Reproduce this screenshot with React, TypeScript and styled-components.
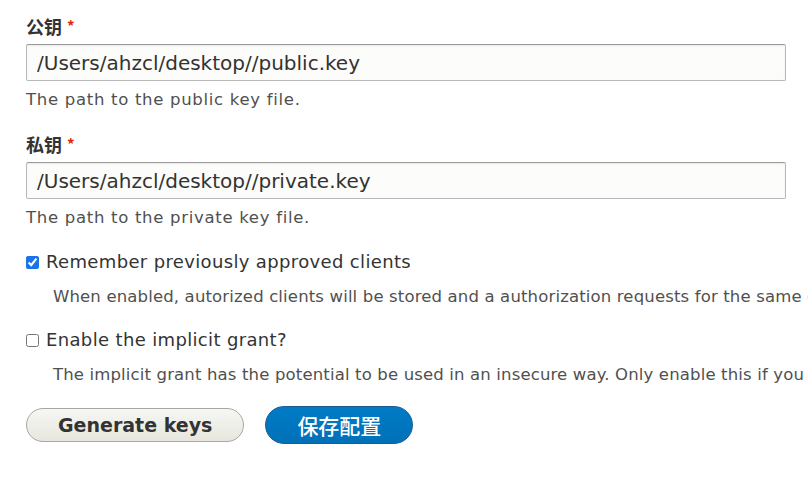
import React from "react";
import styled, { createGlobalStyle } from "styled-components";

const GlobalStyle = createGlobalStyle`
  html, body {
    margin: 0;
    padding: 0;
    background: #fff;
  }
  body {
    font-family: "DejaVu Sans", "Noto Sans CJK SC", sans-serif;
    color: #333;
    overflow: hidden;
  }
`;

const Page = styled.form`
  width: 808px;
  height: 480px;
  padding: 14px 0 0 26px;
  box-sizing: border-box;
  overflow: hidden;
`;

const FormItem = styled.div`
  margin-bottom: 21px;
`;

const Label = styled.label`
  display: block;
  font-size: 18px;
  font-weight: bold;
  line-height: 24px;
  color: #333;
  margin-bottom: 6px;
  font-family: "Noto Sans CJK SC", "DejaVu Sans", sans-serif;
`;

const Required = styled.span`
  color: #e32700;
  font-size: 15px;
  margin-left: 5px;
  vertical-align: 2px;
`;

const TextInput = styled.input`
  display: block;
  width: 760px;
  height: 37px;
  box-sizing: border-box;
  padding: 0 10px;
  border: 1px solid #b8b8b8;
  border-top-color: #999;
  border-radius: 2px;
  background: #fcfcfa;
  box-shadow: inset 0 1px 2px rgba(0, 0, 0, 0.08);
  font-family: "DejaVu Sans", sans-serif;
  font-size: 20px;
  color: #333;
  outline: none;
`;

const Description = styled.div`
  font-size: 16.5px;
  letter-spacing: 0.7px;
  line-height: 22px;
  color: #505050;
  margin-top: 8px;
  white-space: nowrap;
`;

const CheckItem = styled.div`
  margin-bottom: 20px;
  white-space: nowrap;
`;

const CheckLabel = styled.label`
  display: flex;
  align-items: center;
  font-size: 18px;
  letter-spacing: 0.35px;
  line-height: 24px;
  color: #333;
`;

const CheckBox = styled.input`
  width: 13px;
  height: 13px;
  margin: 0 7px 0 0;
  accent-color: #1a73e8;
`;

const CheckDescription = styled(Description)`
  margin-top: 12px;
  padding-left: 27px;
  letter-spacing: 0.15px;
`;

const Actions = styled.div`
  display: flex;
  align-items: center;
  gap: 21px;
  margin-top: 8px;
`;

const Button = styled.button<{ $primary?: boolean }>`
  height: ${({ $primary }) => ($primary ? "38px" : "34px")};
  padding: 0 31px;
  border-radius: 20px;
  border: 1px solid ${({ $primary }) => ($primary ? "#1e5c90" : "#a6a6a6")};
  background: ${({ $primary }) =>
    $primary
      ? "linear-gradient(to bottom, #007bc6, #0071b8)"
      : "linear-gradient(to bottom, #f6f6f3, #e7e7df)"};
  color: ${({ $primary }) => ($primary ? "#fff" : "#333")};
  font-family: "DejaVu Sans", "Noto Sans CJK SC", sans-serif;
  font-size: ${({ $primary }) => ($primary ? "21px" : "19px")};
  font-weight: ${({ $primary }) => ($primary ? "500" : "bold")};
  cursor: pointer;
`;

const PrimaryText = styled.span`
  font-family: "Noto Sans CJK SC", sans-serif;
`;

export default function App() {
  return (
    <>
      <GlobalStyle />
      <Page onSubmit={(e) => e.preventDefault()}>
        <FormItem>
          <Label>
            公钥<Required>*</Required>
          </Label>
          <TextInput defaultValue="/Users/ahzcl/desktop//public.key" />
          <Description>The path to the public key file.</Description>
        </FormItem>
        <FormItem>
          <Label>
            私钥<Required>*</Required>
          </Label>
          <TextInput defaultValue="/Users/ahzcl/desktop//private.key" />
          <Description>The path to the private key file.</Description>
        </FormItem>
        <CheckItem>
          <CheckLabel>
            <CheckBox type="checkbox" defaultChecked />
            Remember previously approved clients
          </CheckLabel>
          <CheckDescription>
            When enabled, autorized clients will be stored and a authorization
            requests for the same client will be skipped.
          </CheckDescription>
        </CheckItem>
        <CheckItem>
          <CheckLabel>
            <CheckBox type="checkbox" />
            Enable the implicit grant?
          </CheckLabel>
          <CheckDescription>
            The implicit grant has the potential to be used in an insecure way.
            Only enable this if you understand the risks.
          </CheckDescription>
        </CheckItem>
        <Actions>
          <Button type="button">Generate keys</Button>
          <Button type="submit" $primary>
            <PrimaryText>保存配置</PrimaryText>
          </Button>
        </Actions>
      </Page>
    </>
  );
}
